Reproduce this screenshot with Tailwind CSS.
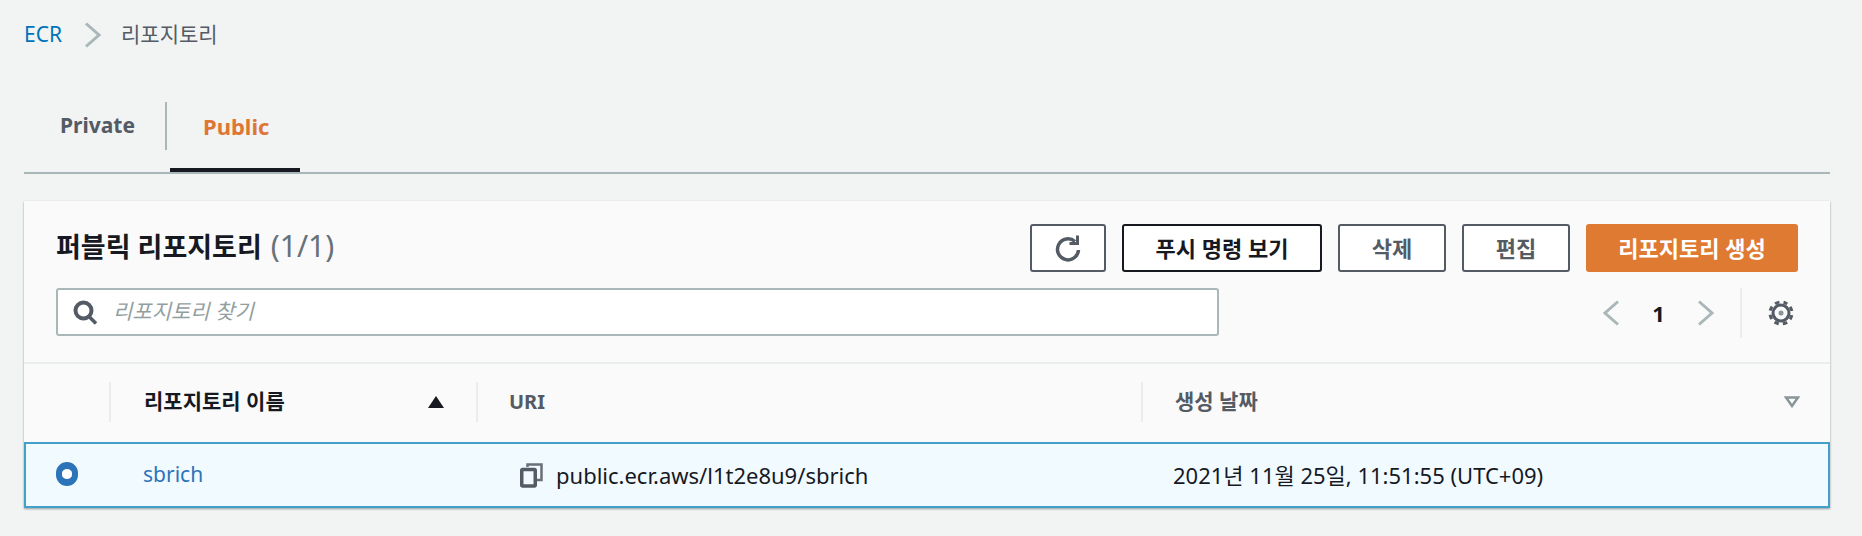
<!DOCTYPE html>
<html lang="ko">
<head>
  <meta charset="UTF-8" />
  <title>ECR 리포지토리</title>
  <script src="https://cdn.jsdelivr.net/npm/@tailwindcss/browser@4"></script>
</head>
<body class="bg-[#f2f3f3] h-[536px] overflow-hidden font-['Noto_Sans','Noto_Sans_CJK_KR',sans-serif] text-[#16191f] text-[21px]">
  <div class="pl-[24px] pr-[32px]">

    <!-- breadcrumb -->
    <nav class="h-[70px] flex items-center">
      <a class="text-[#0073bb] w-[61px]">ECR</a>
      <svg class="w-[16px] h-[26px]" viewBox="0 0 16 26" fill="none" stroke="#aab7b8" stroke-width="3"><path d="M1 1.5 14 13 1 24.500"/></svg>
      <span class="ml-[20px] text-[#545b64]">리포지토리</span>
    </nav>

    <!-- tabs -->
    <div class="mt-[32px] h-[70px] border-b-2 border-[#aab7b8] flex box-content">
      <div class="w-[143px] h-[48px] border-r-2 border-[#aab7b8] flex items-center pl-[36px] font-bold text-[#545b64]">Private</div>
      <div class="ml-[3px] w-[130px] h-[70px] border-b-[4px] border-[#16191f] pl-[33px] pt-[3px] font-bold text-[22px] text-[#dd7733] leading-[42px]">Public</div>
    </div>

    <!-- card -->
    <div class="mt-[27px] bg-white shadow-[0_1px_2px_rgba(0,28,36,0.4)]">
      <div class="bg-[#fafafa] h-[163px] border-b-2 border-[#eaeded] pl-[32px] pr-[32px] pt-[23px]">
        <div class="flex items-center justify-between h-[48px]">
          <h2 class="text-[27px] font-bold leading-[40px] -mt-[3px]">퍼블릭 리포지토리 <span class="ml-[2px] font-normal text-[30px] text-[#687078]">(1/1)</span></h2>
          <div class="flex gap-[16px] text-[22px] font-bold">
            <button class="w-[76px] h-[48px] bg-white border-2 border-[#545b64] rounded-[3px] flex items-center justify-center">
              <svg class="w-[26px] h-[28px]" viewBox="0 0 26 28" fill="none" stroke="#545b64" stroke-width="3.500"><path d="M20 7.500A10.500 10.500 0 1 0 23.500 16"/><path d="M14.500 9.500h8V1.500" stroke-width="3"/></svg>
            </button>
            <button class="w-[200px] h-[48px] bg-white border-2 border-[#16191f] rounded-[3px]">푸시 명령 보기</button>
            <button class="w-[108px] h-[48px] bg-white border-2 border-[#545b64] text-[#545b64] rounded-[3px]">삭제</button>
            <button class="w-[108px] h-[48px] bg-white border-2 border-[#545b64] text-[#545b64] rounded-[3px]">편집</button>
            <button class="w-[212px] h-[48px] bg-[#df7a33] text-white rounded-[3px]">리포지토리 생성</button>
          </div>
        </div>
        <div class="flex mt-[16px] h-[50px]">
          <div class="w-[1163px] h-[48px] bg-white border-2 border-[#aab7b8] rounded-[3px] flex items-center pl-[15px]">
            <svg class="w-[25px] h-[25px]" viewBox="0 0 25 25" fill="none" stroke="#545b64" stroke-width="4"><circle cx="10.500" cy="10.500" r="8"/><path d="m15.500 16 7.500 7.500" stroke-width="3.500"/></svg>
            <span class="ml-[15px] italic text-[#939f9f]">리포지토리 찾기</span>
          </div>
          <div class="ml-auto pr-[4px] flex items-center">
            <svg class="w-[16px] h-[26px]" viewBox="0 0 16 26" fill="none" stroke="#aab7b8" stroke-width="3"><path d="M15 1.500 2 13l13 11.500"/></svg>
            <span class="w-[79px] text-center font-bold text-[22px]">1</span>
            <svg class="w-[16px] h-[26px]" viewBox="0 0 16 26" fill="none" stroke="#aab7b8" stroke-width="3"><path d="M1 1.500 14 13 1 24.500"/></svg>
            <div class="w-[2px] h-[50px] bg-[#eaeded] mx-[26px]"></div>
            <svg class="w-[26px] h-[26px]" viewBox="0 0 26 26" fill="none" stroke="#545b64"><circle cx="13" cy="13" r="8" stroke-width="3"/><circle cx="13" cy="13" r="11" stroke-width="3" stroke-dasharray="4.600 4.040" stroke-dashoffset="2.300" transform="rotate(-67.500 13 13)"/><circle cx="13" cy="13" r="2.500" fill="#879596" stroke="none"/></svg>
          </div>
        </div>
      </div>

      <!-- table header -->
      <div class="h-[78px] pb-[2px] flex items-center bg-[#fafafa] font-bold text-[21px]">
        <div class="w-[87px] h-[40px] border-r-2 border-[#eaeded]"></div>
        <div class="w-[367px] h-[40px] border-r-2 border-[#eaeded] flex items-center justify-between pl-[33px] pr-[32px]">
          <span>리포지토리 이름</span>
          <svg class="w-[16px] h-[12px]" viewBox="0 0 16 12" fill="#16191f"><path d="M8 0 16 12H0z"/></svg>
        </div>
        <div class="w-[665px] h-[40px] border-r-2 border-[#eaeded] flex items-center pl-[31px] text-[20px] text-[#545b64]">URI</div>
        <div class="flex-1 flex items-center justify-between pl-[32px] pr-[30px] text-[#545b64]">
          <span>생성 날짜</span>
          <svg class="w-[16px] h-[12px]" viewBox="0 0 16 12" fill="none" stroke="#879596" stroke-width="2.500"><path d="M2 1.500h12L8 10z"/></svg>
        </div>
      </div>

      <!-- row -->
      <div class="h-[66px] border-2 border-[#44a0ca] bg-[#f1faff] flex items-center text-[22px]">
        <div class="w-[85px] pl-[30px]">
          <div class="w-[22px] h-[24px] rounded-full border-x-[6px] border-y-[7px] border-[#2b74b9] bg-white -mt-[2px]"></div>
        </div>
        <a class="w-[409px] pl-[32px] text-[21px] text-[#2b74b9]">sbrich</a>
        <div class="w-[653px] flex items-center gap-[13px]">
          <svg class="w-[23px] h-[25px]" viewBox="0 0 23 25" fill="none" stroke="#545b64" stroke-width="3.500"><path d="M7.500 4V1.500h14V17H17" stroke-width="2.500" stroke="#687078"/><rect x="1.750" y="6.500" width="13.500" height="16.500" rx="1"/></svg>
          <span>public.ecr.aws/l1t2e8u9/sbrich</span>
        </div>
        <div>2021년 11월 25일, 11:51:55 (UTC+09)</div>
      </div>
    </div>
  </div>
</body>
</html>
